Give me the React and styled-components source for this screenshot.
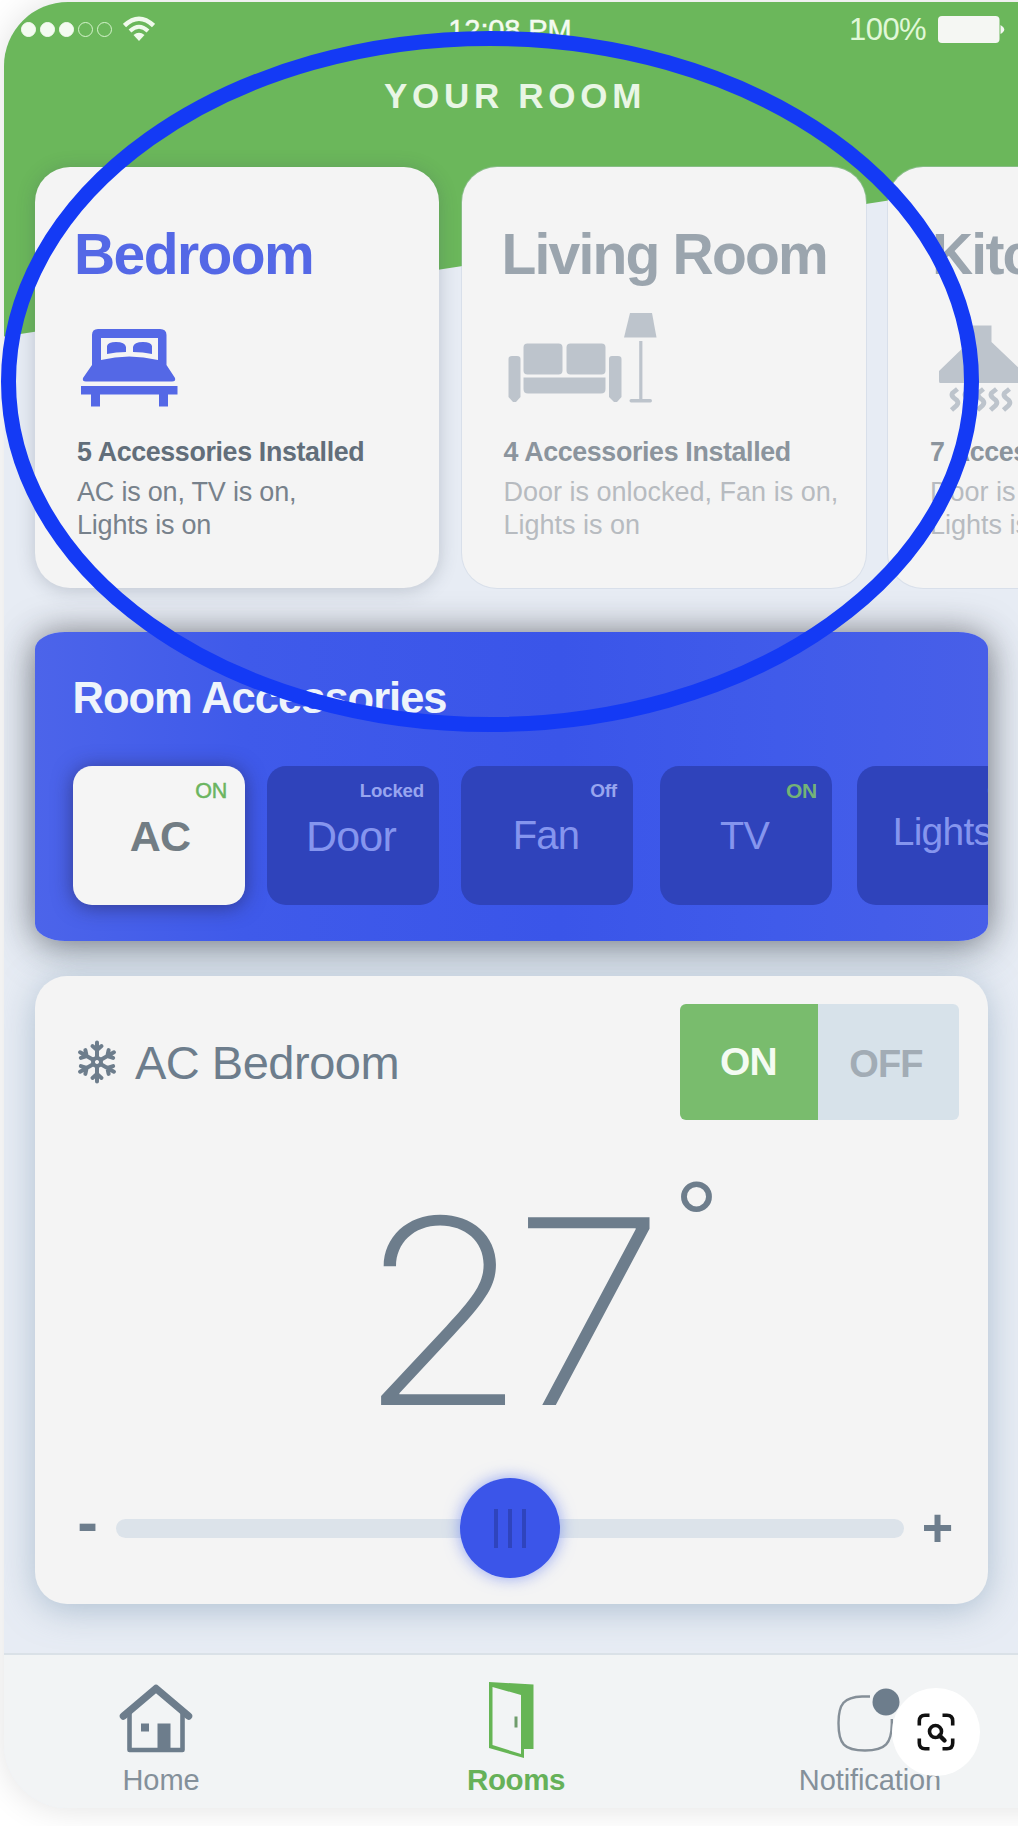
import React from "react";
import styled, { createGlobalStyle, css } from "styled-components";

const sans = '"Liberation Sans", Arial, Helvetica, sans-serif';
const slate = "#6d7d8c";
const green = "#6bb75b";

const GlobalStyle = createGlobalStyle`
  * { box-sizing: border-box; }
  body { margin: 0; background: #fff; font-family: ${sans}; overflow: hidden; }
`;

const Page = styled.div`
  position: relative;
  width: 1018px;
  height: 1826px;
  padding: 2px 0 0 4px;
  overflow: hidden;
`;

const Phone = styled.div`
  position: relative;
  isolation: isolate;
  display: flex;
  flex-direction: column;
  width: 1014px;
  height: 1806px;
  border-radius: 64px 0 0 64px;
  overflow: hidden;
  background: #e7ecf4;
`;

const PhoneShadow = styled.div`
  border-radius: 64px 0 0 64px;
  box-shadow: 0 0 34px rgba(0, 0, 0, 0.12);
  width: 1100px;
`;

const Backdrop = styled.div`
  position: absolute;
  z-index: -1;
  inset: 0 0 auto 0;
  height: 335px;
  background: ${green};
  clip-path: polygon(0 0, 100% 0, 100% 178.5px, 0 334.5px);
`;

const StatusBar = styled.div`
  display: grid;
  grid-template-columns: 1fr auto 1fr;
  align-items: center;
  height: 54px;
  padding: 0 13px 0 17px;
  color: #f4fbf1;
`;

const StatusGroup = styled.div`
  display: flex;
  align-items: center;
  gap: ${(p) => p.$gap}px;
  justify-content: ${(p) => (p.$end ? "flex-end" : "flex-start")};
`;

const Dots = styled.div`
  display: flex;
  gap: 4px;
`;

const Dot = styled.span`
  width: 15px;
  height: 15px;
  border-radius: 50%;
  border: 1.5px solid #d5f3cc;
  background: ${(p) => (p.$on ? "#f4fbf1" : "transparent")};
  ${(p) => p.$on && "border-color: #f4fbf1;"}
`;

const Clock = styled.span`
  margin-right: 6px;
  padding-top: 2px;
  font-size: 29px;
  line-height: 52px;
  letter-spacing: -0.1px;
  -webkit-text-stroke: 0.5px;
`;

const Percent = styled.span`
  padding-top: 2px;
  font-size: 31px;
  line-height: 52px;
  letter-spacing: -0.6px;
  color: #e0f8d8;
`;

const Title = styled.h1`
  margin: 0;
  height: 111px;
  padding: 18px 0 0 8px;
  text-align: center;
  font-size: 35px;
  line-height: 44px;
  letter-spacing: 4.7px;
  font-weight: 700;
  color: #e9f6e5;
`;

const Rooms = styled.div`
  display: flex;
  gap: 22.5px;
  padding-left: 31px;
`;

const RoomCard = styled.section`
  flex: none;
  width: 404px;
  height: 421px;
  padding: 57px 0 0 42px;
  border-radius: 35px;
  background: #f4f4f4;
  box-shadow: ${(p) =>
    p.$active
      ? "0 2px 18px rgba(60, 70, 90, 0.25)"
      : "0 0 0 1px rgba(190, 200, 215, 0.35)"};
`;

const RoomName = styled.h2`
  margin: 0 0 0 ${(p) => p.$shift}px;
  font-size: 57px;
  line-height: 60px;
  letter-spacing: ${(p) => (p.$active ? -1.6 : -1.8)}px;
  white-space: nowrap;
  color: ${(p) => (p.$active ? "#5468e6" : "#9ba5ae")};
`;

const RoomIcon = styled.svg`
  display: block;
  height: 127px;
  overflow: visible;
`;

const RoomCount = styled.div`
  margin-top: 25px;
  font-size: 26.8px;
  line-height: 32px;
  letter-spacing: -0.35px;
  font-weight: 700;
  white-space: nowrap;
  color: ${(p) => (p.$active ? "#626e7a" : "#8b949d")};
`;

const RoomState = styled.div`
  margin-top: 8px;
  font-size: 27px;
  line-height: 32.5px;
  letter-spacing: ${(p) => p.$spacing}px;
  white-space: pre;
  color: ${(p) => (p.$active ? "#77818b" : "#b7bbc0")};
`;

const Accessories = styled.section`
  flex: none;
  position: relative;
  margin: 43.5px 30.5px 0 31px;
  height: 309px;
  border-radius: 30px / 17px;
  box-shadow: 0 0 34px rgba(60, 55, 60, 0.56), 0 14px 40px rgba(100, 130, 150, 0.35);
`;

const AccessoriesBody = styled.div`
  height: 100%;
  padding: 41px 0 0 38px;
  border-radius: inherit;
  overflow: hidden;
  background: linear-gradient(90deg, #4c64ea 0%, #3f5aea 22%, #3a55e9 55%, #405bea 78%, #485fe8 100%);
`;

const AccessoriesTitle = styled.h2`
  margin: 0 0 43px -0.5px;
  font-size: 43.5px;
  line-height: 50px;
  letter-spacing: -1px;
  color: #eef4fb;
`;

const Tiles = styled.div`
  display: flex;
`;

const Tile = styled.button`
  flex: none;
  display: flex;
  flex-direction: column;
  width: 172px;
  height: 139.5px;
  margin: 0 ${(p) => p.$gap}px 0 0;
  padding: 13.5px 15px 0;
  border: 0;
  border-radius: 19px;
  font-family: inherit;
  background: #2f43bb;
  ${(p) =>
    p.$active &&
    css`
      background: #f5f5f5;
      box-shadow: 0 2px 20px rgba(40, 40, 90, 0.65);
    `}
`;

const Badge = styled.span`
  align-self: flex-end;
  height: 24px;
  font-size: ${(p) => p.$size}px;
  line-height: 24px;
  letter-spacing: -0.2px;
  font-weight: ${(p) => p.$weight};
  margin-right: ${(p) => p.$inset}px;
  -webkit-text-stroke: ${(p) => (p.$weight === 400 ? 0.5 : 0)}px;
  color: ${(p) => p.$color};
`;

const TileLabel = styled.span`
  align-self: center;
  margin-top: ${(p) => p.$top}px;
  margin-right: ${(p) => p.$nudge}px;
  font-size: ${(p) => p.$size}px;
  line-height: 46px;
  letter-spacing: -0.8px;
  font-weight: ${(p) => (p.$active ? 700 : 400)};
  color: ${(p) => (p.$active ? "#727d84" : "#8595ee")};
`;

const Climate = styled.section`
  flex: none;
  position: relative;
  display: flex;
  flex-direction: column;
  height: 628px;
  margin: 35.5px 30.5px 0 31px;
  border-radius: 32px;
  background: #f4f4f4;
  box-shadow: 0 6px 34px rgba(120, 150, 175, 0.5);
`;

const ClimateHeader = styled.div`
  display: flex;
  justify-content: space-between;
  height: 144px;
  padding: 27.5px 29px 0 43px;
`;

const ClimateName = styled.h2`
  display: flex;
  gap: 19px;
  margin: 32.5px 0 0;
  font-size: 47px;
  line-height: 54px;
  letter-spacing: -0.5px;
  font-weight: 400;
  color: ${slate};
`;

const SnowIcon = styled.svg`
  width: 38px;
  height: 44px;
  margin-top: 4px;
`;

const Toggle = styled.div`
  display: flex;
  height: 116px;
  border-radius: 6px;
  overflow: hidden;
`;

const ToggleSide = styled.button`
  width: ${(p) => (p.$on ? 138 : 141)}px;
  border: 0;
  padding: ${(p) => (p.$on ? "1px 0 0" : "6px 4px 0 0")};
  font: 700 ${(p) => (p.$on ? 39 : 38)}px ${sans};
  letter-spacing: -0.8px;
  color: ${(p) => (p.$on ? "#f4fbf2" : "#a2acb5")};
  background: ${(p) => (p.$on ? "#79bc6d" : "#d7e2ea")};
`;

const Reading = styled.div`
  display: flex;
  height: 349px;
  padding: 41px 0 0 321.5px;
  color: ${slate};
`;

const Degrees = styled.span`
  font-family: Inter, "Open Sans", sans-serif;
  font-weight: 200;
  font-size: 258px;
  line-height: 300px;
  letter-spacing: -15px;
  transform: scaleX(1.075);
  transform-origin: left center;
`;

const DegreeMark = styled.span`
  margin: 9px 0 0 46px;
  font-size: 110px;
  line-height: 100px;
`;

const Slider = styled.div`
  display: flex;
  align-items: center;
  height: 118px;
  padding: 0 34px 0 42px;
`;

const Step = styled.button`
  border: 0;
  padding: 0;
  margin-bottom: ${(p) => p.$lift}px;
  background: none;
  font: 700 ${(p) => p.$size}px / 60px ${sans};
  width: ${(p) => p.$width}px;
  height: 60px;
  color: ${slate};
`;

const Track = styled.div`
  flex: 1;
  display: flex;
  align-items: center;
  justify-content: center;
  height: 19px;
  margin: 0 18px 0 18px;
  border-radius: 10px;
  background: #dce3ea;
`;

const Knob = styled.div`
  flex: none;
  display: flex;
  align-items: center;
  justify-content: center;
  gap: 10px;
  width: 100px;
  height: 100px;
  border-radius: 50%;
  background: #3b55e9;
  box-shadow: 0 0 16px rgba(80, 110, 240, 0.6);
`;

const Grip = styled.span`
  width: 4px;
  height: 39px;
  background: #2f44bd;
`;

const NavBar = styled.nav`
  flex: none;
  display: grid;
  grid-template-columns: 314px 396px 312px;
  height: 155px;
  margin-top: auto;
  border-top: 2px solid #dae1e7;
  background: #f2f4f5;
`;

const NavItem = styled.a`
  display: flex;
  flex-direction: column;
  align-items: center;
`;

const NavIcon = styled.svg`
  height: 108px;
  width: 100px;
  flex: none;
  overflow: visible;
`;

const NavLabel = styled.span`
  font-size: ${(p) => (p.$active ? 29.5 : 29)}px;
  line-height: 34px;
  letter-spacing: ${(p) => (p.$active ? -0.4 : -0.1)}px;
  font-weight: ${(p) => (p.$active ? 700 : 400)};
  color: ${(p) => (p.$active ? "#66b159" : "#84909a")};
`;

const LensButton = styled.button`
  position: absolute;
  left: 892px;
  top: 1688px;
  display: flex;
  align-items: center;
  justify-content: center;
  width: 88px;
  height: 88px;
  padding: 0;
  border: 0;
  border-radius: 50%;
  background: #fff;
`;

const Annotation = styled.svg`
  position: absolute;
  left: 0;
  top: 0;
  width: 1018px;
  height: 760px;
  pointer-events: none;
`;

const Bed = () => (
  <RoomIcon width="100" viewBox="77 283 100 127" fill="#5468e6" aria-hidden="true">
    <path
      fillRule="evenodd"
      d="M92 364V334Q92 328 98 328H160Q166.500 328 166.500 334V364L175 377Q176 380.500 172 380.500H86Q82 380.500 83 377ZM101 337V359Q129 352 158 359V337Z"
    />
    <path d="M107 353V345Q108 341 116 341Q125 341 126 346V351Q116 351 107 353ZM152 353V345Q151 341 143 341Q134 341 133 346V351Q143 351 152 353Z" />
    <path d="M81 385H177.500V393.500H168V405.500H159V393.500H100V405.500H91V393.500H81Z" />
  </RoomIcon>
);

const Sofa = () => (
  <RoomIcon width="160" viewBox="504 283 160 127" fill="#bdc4cc" aria-hidden="true">
    <rect x="523.500" y="342.500" width="39" height="31" rx="4" />
    <rect x="566.500" y="342.500" width="39" height="31" rx="4" />
    <path d="M523.500 376.500H605.500V388Q605.500 392.500 601 392.500H528Q523.500 392.500 523.500 388Z" />
    <path d="M508.500 358Q508.500 355 512 355H517Q520.500 355 520.500 358V396L516 401H513L508.500 396Z" />
    <path d="M609 358Q609 355 612 355H618Q621.500 355 621.500 358V396L617 401H614L609 396Z" />
    <path d="M630 312H652L656.500 336.500H624Z" />
    <rect x="639.200" y="340" width="3.200" height="59" />
    <rect x="629.500" y="398" width="22.500" height="3.500" rx="1.700" />
  </RoomIcon>
);

const Hood = () => (
  <RoomIcon width="92" viewBox="930 283 92 127" aria-hidden="true">
    <path fill="#bdc4cc" d="M969 324.500H991.500V341L1021 369V382H940Q939 382 939 380V370L969 341Z" />
    {[955, 968, 981, 994, 1007].map((x) => (
      <path
        key={x}
        d={`M${x + 2.5} 388L${x - 2.5} 392Q${x - 4} 394.500 ${x - 1} 397L${x + 2} 399.500Q${x + 4} 402 ${x + 1.5} 404.500L${x - 3.5} 409`}
        fill="none"
        stroke="#bdc4cc"
        strokeWidth="4.800"
      />
    ))}
  </RoomIcon>
);

const Snowflake = () => (
  <SnowIcon viewBox="-19 -22 38 44" fill="none" stroke={slate} strokeWidth="4" strokeLinecap="round" strokeLinejoin="round" aria-hidden="true">
    {[0, 60, 120, 180, 240, 300].map((a) => (
      <path key={a} transform={`rotate(${a})`} d="M0 -4.500V-19.500M-4.500 -16L0 -12L4.500 -16M0 -4.500L3.900 -2.250" />
    ))}
  </SnowIcon>
);

const WifiIcon = () => (
  <svg width="32" height="26" viewBox="124 16 32 26" fill="none" stroke="#f0faec" aria-hidden="true">
    <path d="M125.500 25.500Q140 12 154.500 25.500" strokeWidth="4.500" />
    <path d="M131 31Q140 22.500 149 31" strokeWidth="4" />
    <path d="M140 41L134.500 35Q140 30.500 145.500 35Z" fill="#f0faec" stroke="none" />
  </svg>
);

const BatteryIcon = () => (
  <svg width="67" height="27" viewBox="0 0 67 27" fill="#f5f7f3" aria-hidden="true">
    <rect width="61.500" height="27" rx="4" />
    <path d="M62.500 9Q70 13.500 62.500 18Z" />
  </svg>
);

const HomeIcon = () => (
  <NavIcon viewBox="110 1655 100 108" fill="none" stroke={slate} aria-hidden="true">
    <path d="M122.500 1716L155 1688.500L187.500 1716" strokeWidth="7.500" strokeLinecap="round" strokeLinejoin="round" />
    <path d="M128.500 1713V1750H181.500V1713" strokeWidth="4.600" strokeLinejoin="round" />
    <path d="M140 1723.500H148V1731.500H140ZM156.500 1723.500H169.500V1750H156.500Z" fill={slate} stroke="none" />
  </NavIcon>
);

const DoorIcon = () => (
  <NavIcon viewBox="466 1655 100 108" aria-hidden="true">
    <path
      fill="#66b555"
      fillRule="evenodd"
      d="M489 1682L533.500 1684.500V1749H524V1758L489 1748ZM492.500 1687V1745L521 1754V1695Z"
    />
    <rect x="514.500" y="1716.500" width="3" height="11" fill="#6f9c6c" />
  </NavIcon>
);

const NotificationIcon = () => (
  <NavIcon viewBox="820 1655 100 108" fill="none" aria-hidden="true">
    <path
      d="M870 1696.500H862C844 1697 838.500 1704 838.500 1723C838.500 1744 844 1750.500 865 1750.500C886 1750.500 891.500 1743 891.800 1724V1719"
      stroke="#858f98"
      strokeWidth="2.400"
    />
    <circle cx="886" cy="1702" r="13.500" fill={slate} />
  </NavIcon>
);

const LensIcon = () => (
  <svg width="38" height="38" viewBox="0 0 38 38" fill="none" stroke="#111" strokeWidth="3.600" aria-hidden="true">
    <path d="M2.300 12.500V8Q2.300 2.300 8 2.300H12.500M25.500 2.300H30Q35.700 2.300 35.700 8V12.500M35.700 25.500V30Q35.700 35.700 30 35.700H25.500M12.500 35.700H8Q2.300 35.700 2.300 30V25.500" />
    <circle cx="18.500" cy="18.500" r="6" />
    <path d="M22.500 22.500L27.500 27.500" strokeWidth="4.400" strokeLinecap="round" />
  </svg>
);

const rooms = [
  { name: "Bedroom", shift: -3, Icon: Bed, count: "5 Accessories Installed", state: "AC is on, TV is on,\nLights is on", active: true, spacing: -0.2 },
  { name: "Living Room", shift: -2, Icon: Sofa, count: "4 Accessories Installed", state: "Door is onlocked, Fan is on,\nLights is on", spacing: 0 },
  { name: "Kitchen", shift: 2, Icon: Hood, count: "7 Accessories Installed", state: "Door is onlocked, Fan is on,\nLights is on", spacing: 0 },
];

const lilac = "#98a5ef";
const tiles = [
  { label: "AC", size: 43, top: 10, nudge: -2, gap: 22, badge: "ON", badgeSize: 21.5, weight: 400, inset: 3, color: "#6bb560", active: true },
  { label: "Door", size: 43, top: 10, nudge: 4, gap: 22, badge: "Locked", badgeSize: 18.7, weight: 700, inset: 0, color: lilac },
  { label: "Fan", size: 40, top: 9, nudge: 2, gap: 27, badge: "Off", badgeSize: 19, weight: 700, inset: 1, color: lilac },
  { label: "TV", size: 39.5, top: 9, nudge: 3, gap: 25, badge: "ON", badgeSize: 21, weight: 700, inset: 0, color: "#74b277" },
  { label: "Lights", size: 39, top: 5.5, nudge: 1, gap: 0, badge: "Off", badgeSize: 19, weight: 700, inset: 0, color: lilac },
];

export default function App() {
  return (
    <Page>
      <GlobalStyle />
      <PhoneShadow>
        <Phone>
          <Backdrop />
          <StatusBar>
            <StatusGroup $gap={11}>
              <Dots>
                {[1, 1, 1, 0, 0].map((on, i) => (
                  <Dot key={i} $on={on} />
                ))}
              </Dots>
              <WifiIcon />
            </StatusGroup>
            <Clock>12:08 PM</Clock>
            <StatusGroup $gap={12} $end>
              <Percent>100%</Percent>
              <BatteryIcon />
            </StatusGroup>
          </StatusBar>
          <Title>YOUR ROOM</Title>

          <Rooms>
            {rooms.map(({ name, shift, Icon, count, state, active, spacing }) => (
              <RoomCard key={name} $active={active}>
                <RoomName $active={active} $shift={shift}>{name}</RoomName>
                <Icon />
                <RoomCount $active={active}>{count}</RoomCount>
                <RoomState $active={active} $spacing={spacing}>{state}</RoomState>
              </RoomCard>
            ))}
          </Rooms>

          <Accessories>
            <AccessoriesBody>
              <AccessoriesTitle>Room Accessories</AccessoriesTitle>
              <Tiles>
                {tiles.map((t) => (
                  <Tile key={t.label} $active={t.active} $gap={t.gap}>
                    <Badge $size={t.badgeSize} $weight={t.weight} $inset={t.inset} $color={t.color}>{t.badge}</Badge>
                    <TileLabel $active={t.active} $size={t.size} $top={t.top} $nudge={t.nudge}>{t.label}</TileLabel>
                  </Tile>
                ))}
              </Tiles>
            </AccessoriesBody>
          </Accessories>

          <Climate>
            <ClimateHeader>
              <ClimateName>
                <Snowflake />
                AC Bedroom
              </ClimateName>
              <Toggle>
                <ToggleSide $on>ON</ToggleSide>
                <ToggleSide>OFF</ToggleSide>
              </Toggle>
            </ClimateHeader>
            <Reading>
              <Degrees>27</Degrees>
              <DegreeMark>°</DegreeMark>
            </Reading>
            <Slider>
              <Step $size={62} $width={21} $lift={13}>-</Step>
              <Track>
                <Knob>
                  <Grip />
                  <Grip />
                  <Grip />
                </Knob>
              </Track>
              <Step $size={54} $width={32} $lift={2}>+</Step>
            </Slider>
          </Climate>

          <NavBar>
            <NavItem>
              <HomeIcon />
              <NavLabel>Home</NavLabel>
            </NavItem>
            <NavItem>
              <DoorIcon />
              <NavLabel $active>Rooms</NavLabel>
            </NavItem>
            <NavItem>
              <NotificationIcon />
              <NavLabel>Notification</NavLabel>
            </NavItem>
          </NavBar>
        </Phone>
      </PhoneShadow>
      <LensButton aria-label="Search inside image">
        <LensIcon />
      </LensButton>
      <Annotation viewBox="0 0 1018 760" aria-hidden="true">
        <ellipse cx="490" cy="381.500" rx="481.500" ry="343" fill="none" stroke="#143af5" strokeWidth="15" />
      </Annotation>
    </Page>
  );
}
